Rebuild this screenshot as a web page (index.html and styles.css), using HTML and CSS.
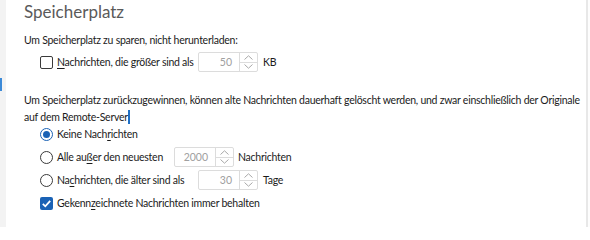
FILE: index.html
```html
<!DOCTYPE html>
<html lang="de">
<head>
<meta charset="utf-8">
<link rel="stylesheet" href="styles.css">
</head>
<body>
<div class="page">
  <div class="sidebar"><span class="marker"></span></div>
  <main class="content">
    <h1 class="title">Speicherplatz</h1>
    <p class="desc first">Um Speicherplatz zu sparen, nicht herunterladen:</p>
    <div class="row">
      <span class="check"></span>
      <span class="label w2"><u>N</u>achrichten, die größer sind als</span>
      <span class="spin"><span class="num">50</span><span class="arrows"><span class="up"><svg width="9" height="5" viewBox="0 0 9 5"><path d="M0.5 4.5 L4.5 0.8 L8.5 4.5" fill="none" stroke="#a8a8a8" stroke-width="1"/></svg></span><span class="down"><svg width="9" height="5" viewBox="0 0 9 5"><path d="M0.5 0.5 L4.5 4.2 L8.5 0.5" fill="none" stroke="#a8a8a8" stroke-width="1"/></svg></span></span></span>
      <span class="unit">KB</span>
    </div>
    <p class="desc para">Um Speicherplatz zurückzugewinnen, können alte Nachrichten dauerhaft gelöscht werden, und zwar einschließlich der Originale auf dem Remote-Server<span class="caret"></span></p>
    <div class="options">
      <div class="row opt">
        <span class="radio on"></span>
        <span class="label">Keine Nach<u>r</u>ichten</span>
      </div>
      <div class="row opt">
        <span class="radio"></span>
        <span class="label w1">Alle au<u>ß</u>er den neuesten</span>
        <span class="spin"><span class="num">2000</span><span class="arrows"><span class="up"><svg width="9" height="5" viewBox="0 0 9 5"><path d="M0.5 4.5 L4.5 0.8 L8.5 4.5" fill="none" stroke="#a8a8a8" stroke-width="1"/></svg></span><span class="down"><svg width="9" height="5" viewBox="0 0 9 5"><path d="M0.5 0.5 L4.5 4.2 L8.5 0.5" fill="none" stroke="#a8a8a8" stroke-width="1"/></svg></span></span></span>
        <span class="unit u2">Nachrichten</span>
      </div>
      <div class="row opt">
        <span class="radio"></span>
        <span class="label w2">Na<u>c</u>hrichten, die älter sind als</span>
        <span class="spin"><span class="num">30</span><span class="arrows"><span class="up"><svg width="9" height="5" viewBox="0 0 9 5"><path d="M0.5 4.5 L4.5 0.8 L8.5 4.5" fill="none" stroke="#a8a8a8" stroke-width="1"/></svg></span><span class="down"><svg width="9" height="5" viewBox="0 0 9 5"><path d="M0.5 0.5 L4.5 4.2 L8.5 0.5" fill="none" stroke="#a8a8a8" stroke-width="1"/></svg></span></span></span>
        <span class="unit">Tage</span>
      </div>
      <div class="row opt">
        <span class="check on"><svg width="13" height="13" viewBox="0 0 13 13"><path d="M2.8 6.8 L5.3 9.3 L10.2 3.8" fill="none" stroke="#fff" stroke-width="1.8"/></svg></span>
        <span class="label">Gekenn<u>z</u>eichnete Nachrichten immer behalten</span>
      </div>
    </div>
  </main>
  <div class="edge"></div>
</div>
</body>
</html>
```

FILE: styles.css
```css
* { box-sizing: border-box; }
html, body { margin: 0; padding: 0; background: #fff; }
body {
  font-family: Lato, "Open Sans", sans-serif;
  font-size: 10.5px;
  letter-spacing: -0.25px;
  color: #1b1b1b;
  width: 590px;
  height: 227px;
  overflow: hidden;
}
.page { display: flex; height: 227px; }
.sidebar {
  width: 6px;
  background: #f3f3f3;
  position: relative;
  flex: none;
}
.marker {
  position: absolute;
  left: 0;
  top: 78px;
  width: 2px;
  height: 13px;
  background: #3c8ad8;
}
.content {
  flex: 1;
  padding-left: 18px;
  border-right: 2px solid #e8e8e8;
}
.edge { width: 2px; flex: none; background: #fdfdfd; }
.title {
  margin: 2px 0 0;
  font-size: 17px;
  font-weight: 400;
  letter-spacing: 0;
  line-height: 20px;
  color: #5a5a5a;
}
.desc { margin: 0; line-height: 17px; }
.first { margin-top: 10px; }
.para { margin-top: 20px; width: 556px; }
.row {
  display: flex;
  align-items: center;
  height: 20px;
  padding-left: 16px;
}
.first + .row { margin-top: 3px; }
.options { margin-top: -2px; display: flex; flex-direction: column; gap: 3px; }
.label { margin-left: 4px; white-space: nowrap; }
u { text-decoration-thickness: 1px; text-underline-offset: 2px; }
.w1 { width: 113px; }
.w2 { width: 137px; }
.check {
  width: 13px; height: 13px;
  border: 1px solid #3a3a3a;
  border-radius: 2px;
  flex: none;
  display: inline-flex;
}
.check.on { background: #1a62b5; border: none; }
.radio {
  width: 13px; height: 13px;
  border: 1px solid #3a3a3a;
  border-radius: 50%;
  flex: none;
  position: relative;
}
.radio.on { border-color: #1a62b5; }
.radio.on::after {
  content: "";
  position: absolute;
  left: 2px; top: 2px;
  width: 7px; height: 7px;
  border-radius: 50%;
  background: #1a62b5;
}
.spin {
  display: flex;
  width: 60px;
  height: 20px;
  border: 1px solid #dcdcdc;
  border-radius: 2px;
  margin-left: 4px;
  flex: none;
}
.num {
  flex: 1;
  text-align: right;
  padding-right: 7px;
  color: #a0a0a0;
  line-height: 18px;
  letter-spacing: 0;
}
.arrows {
  width: 18px;
  border-left: 1px solid #dcdcdc;
  display: flex;
  flex-direction: column;
}
.up, .down { flex: 1; display: flex; align-items: center; justify-content: center; }
.up { border-bottom: 1px solid #dcdcdc; }
.unit { margin-left: 5px; }
.unit.u2 { margin-left: 4px; }
.caret {
  display: inline-block;
  width: 2px;
  height: 14px;
  background: #1f6fc5;
  vertical-align: -3px;
}
```
